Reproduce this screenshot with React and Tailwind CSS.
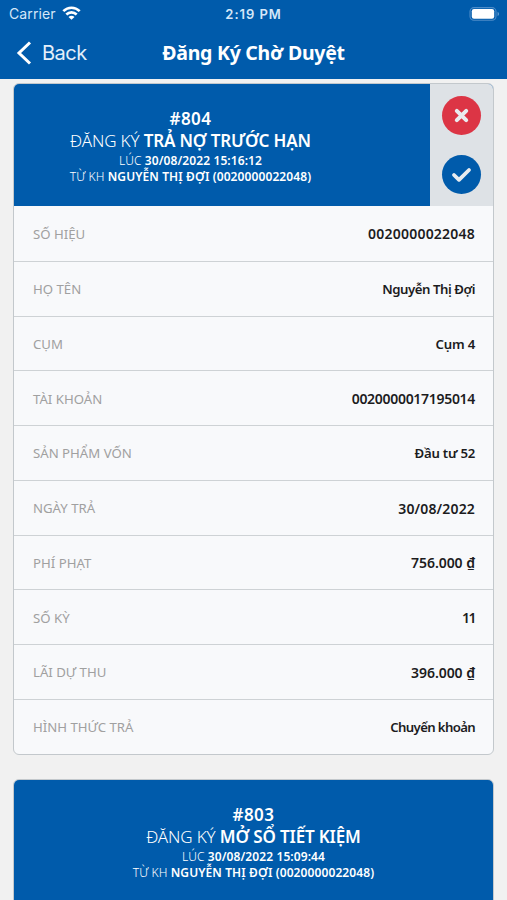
import clsx from 'clsx';

const registros = [
  {
    id: 804,
    accion: 'TRẢ NỢ TRƯỚC HẠN',
    hora: '30/08/2022 15:16:12',
    cliente: 'NGUYỄN THỊ ĐỢI (0020000022048)',
    pendiente: true,
    filas: [
      { label: 'SỐ HIỆU', value: '0020000022048', tracking: 'tracking-[0.22px]' },
      { label: 'HỌ TÊN', value: 'Nguyễn Thị Đợi', texto: true, tracking: 'tracking-[-0.45px]' },
      { label: 'CỤM', value: 'Cụm 4', texto: true, tracking: 'tracking-[-0.2px]' },
      { label: 'TÀI KHOẢN', value: '0020000017195014', tracking: 'tracking-[-0.3px]' },
      { label: 'SẢN PHẨM VỐN', value: 'Đầu tư 52', texto: true, tracking: 'tracking-[-0.25px]' },
      { label: 'NGÀY TRẢ', value: '30/08/2022', tracking: 'tracking-[0.15px]' },
      { label: 'PHÍ PHẠT', value: '756.000 ₫', tracking: 'tracking-[-0.05px]' },
      { label: 'SỐ KỲ', value: '11', tracking: 'tracking-[-1.5px]' },
      { label: 'LÃI DỰ THU', value: '396.000 ₫', tracking: 'tracking-[-0.05px]' },
      { label: 'HÌNH THỨC TRẢ', value: 'Chuyển khoản', texto: true, tracking: 'tracking-[-0.65px]' },
    ],
  },
  {
    id: 803,
    accion: 'MỞ SỔ TIẾT KIỆM',
    hora: '30/08/2022 15:09:44',
    cliente: 'NGUYỄN THỊ ĐỢI (0020000022048)',
    pendiente: false,
    filas: [],
  },
];

const StatusBar = () => (
  <div className="flex h-[28px] items-center px-[9px] font-['Inter',sans-serif] text-[#d5e7f8]">
    <div className="flex flex-1 items-center gap-[6px]">
      <span className="-mt-[1px] text-[14px] tracking-[0.1px]">Carrier</span>
      <svg width="19" height="14" viewBox="0 0 19 14" fill="none" stroke="white" strokeWidth="2.6" className="-mt-[2px]">
        <path d="M1.3 5.2C6 .5 13 .5 17.7 5.2" />
        <path d="M4.3 8.5c3-2.9 7.4-2.9 10.4 0" />
        <path d="M9.5 13.8 6.5 10.9c1.7-1.6 4.3-1.6 6 0z" fill="white" stroke="none" />
      </svg>
    </div>
    <span className="pt-[1px] text-[13px] font-semibold tracking-[0.95px]">2:19 PM</span>
    <div className="flex flex-1 justify-end">
      <svg width="31" height="14" viewBox="0 0 31 14" className="-mt-[1px] -mr-[2px]">
        <rect x="1" y=".6" width="26" height="12.6" rx="4" fill="none" stroke="#4d8cc8" strokeWidth="1.1" />
        <rect x="2.8" y="2.1" width="22.4" height="9.6" rx="2.2" fill="white" />
        <path d="M28.6 4.8c1.8.8 1.8 3.5 0 4.3z" fill="#6fa3d4" />
      </svg>
    </div>
  </div>
);

const NavBar = () => (
  <div className="flex h-[51px] items-center px-[16px] pb-[2px] text-white">
    <div className="flex flex-1 items-center gap-[10px]">
      <svg width="16" height="24" viewBox="0 0 16 24" fill="none" stroke="white" strokeWidth="3">
        <path d="M14 1.5 3 12l11 10.5" />
      </svg>
      <span className="font-['Inter',sans-serif] text-[20px] tracking-[-0.5px] text-[#e3effa]">Back</span>
    </div>
    <h1 className="text-[19.5px] font-bold tracking-[-0.25px]">Đăng Ký Chờ Duyệt</h1>
    <div className="flex-1" />
  </div>
);

const CardHeader = ({ item }) => (
  <div className={clsx('flex bg-[#005bab]', item.pendiente ? 'h-[122px]' : 'h-[140px]')}>
    <div className={clsx('flex-1 pt-[24px] text-center text-white', item.pendiente && 'pr-[63px]')}>
      <div className="h-[22px] text-[17px] leading-[22px] font-semibold tracking-[0.5px]">#{item.id}</div>
      <div className="h-[22px] text-[17px] leading-[22px] font-light tracking-[-0.15px] whitespace-nowrap">
        ĐĂNG KÝ <span className="font-semibold">{item.accion}</span>
      </div>
      <div className="h-[17px] text-[12px] leading-[17px] font-light tracking-[0.1px]">
        LÚC <span className="font-semibold">{item.hora}</span>
      </div>
      <div className="h-[16px] text-[12px] leading-[16px] font-light tracking-[0.1px] whitespace-nowrap">
        TỪ KH <span className="font-semibold">{item.cliente}</span>
      </div>
    </div>
    {item.pendiente && (
      <div className="flex w-[63px] flex-col items-center gap-[20px] bg-[#dee2e6] pt-[12px]">
        <button className="flex size-[39px] items-center justify-center rounded-full bg-[#dc3545]">
          <svg width="21" height="21" viewBox="0 0 21 21" fill="none" stroke="#e9ecef" strokeWidth="4" strokeLinecap="round">
            <path d="m5.8 5.8 9.4 9.4M15.2 5.8l-9.4 9.4" />
          </svg>
        </button>
        <button className="flex size-[39px] items-center justify-center rounded-full bg-[#005bab]">
          <svg width="21" height="21" viewBox="0 0 21 21" fill="none" stroke="#e9ecef" strokeWidth="3.8" strokeLinecap="round" strokeLinejoin="round">
            <path d="m3 11 5 4.8L18 6" />
          </svg>
        </button>
      </div>
    )}
  </div>
);

const Card = ({ item }) => (
  <div className="shrink-0 overflow-hidden rounded-[6px] border border-[#c3c8cc] bg-[#f8f9fb]">
    <CardHeader item={item} />
    {item.filas.map((f, i) => (
      <div
        key={f.label}
        className={clsx(
          'flex h-[54.75px] items-center justify-between pt-[1px] pr-[18px] pl-[19px]',
          i > 0 && 'border-t border-[#ced2d5]'
        )}
      >
        <span className="pt-[2px] text-[13.2px] text-[#a0a0a0]">{f.label}</span>
        <span
          className={clsx(
            'font-semibold text-[#1c1c1e]',
            f.texto ? 'pt-[2px] text-[13.2px]' : 'text-[14px]',
            f.tracking
          )}
        >
          {f.value}
        </span>
      </div>
    ))}
  </div>
);

export default function App() {
  return (
    <div className="flex h-[900px] w-[507px] flex-col overflow-hidden bg-[#f1f1f1] font-['Noto_Sans','Open_Sans',sans-serif]">
      <header className="shrink-0 bg-[#005bab]">
        <StatusBar />
        <NavBar />
      </header>
      <main className="flex min-h-0 flex-1 flex-col gap-[24.5px] overflow-hidden px-[13px] pt-[4px]">
        {registros.map((item) => (
          <Card key={item.id} item={item} />
        ))}
      </main>
    </div>
  );
}
